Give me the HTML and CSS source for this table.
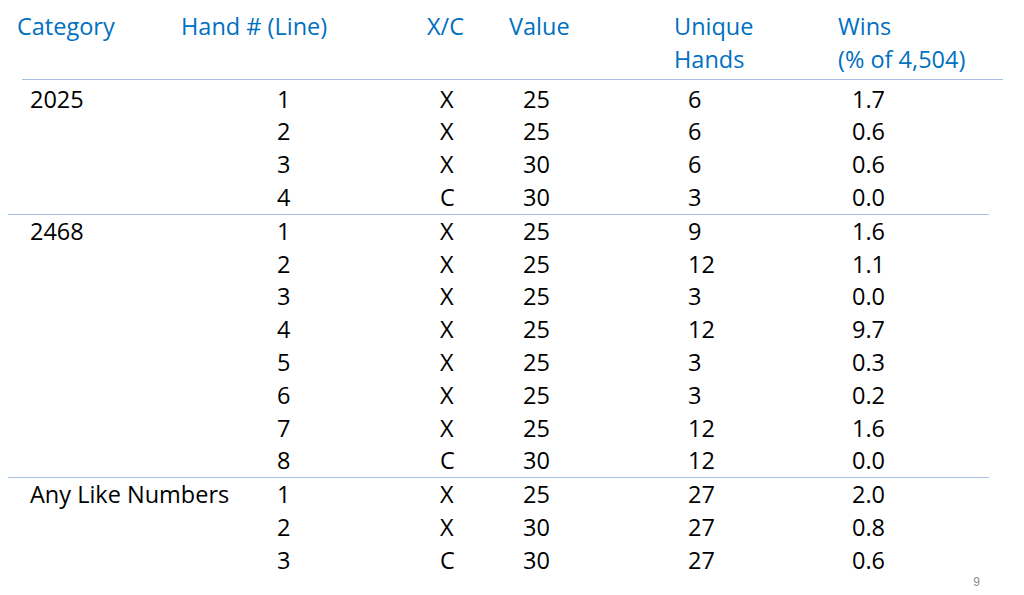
FILE: index.html
```html
<!DOCTYPE html>
<html lang="en">
<head>
    <meta charset="UTF-8">
    <meta name="viewport" content="width=device-width, initial-scale=1.0">
    <title>Hand Wins by Category</title>
    <link rel="stylesheet" href="styles.css">
</head>
<body>
    <div class="slide">
        <div class="table-head">
            <div class="th">Category</div>
            <div class="th">Hand # (Line)</div>
            <div class="th">X/C</div>
            <div class="th">Value</div>
            <div class="th">Unique<br>Hands</div>
            <div class="th">Wins<br>(% of 4,504)</div>
        </div>

        <hr class="rule rule-top">
        <div class="group first">
            <div class="row"><span class="cat">2025</span><span class="hand">1</span><span class="xc">X</span><span class="val">25</span><span class="uniq">6</span><span class="wins">1.7</span></div>
            <div class="row"><span class="cat"></span><span class="hand">2</span><span class="xc">X</span><span class="val">25</span><span class="uniq">6</span><span class="wins">0.6</span></div>
            <div class="row"><span class="cat"></span><span class="hand">3</span><span class="xc">X</span><span class="val">30</span><span class="uniq">6</span><span class="wins">0.6</span></div>
            <div class="row"><span class="cat"></span><span class="hand">4</span><span class="xc">C</span><span class="val">30</span><span class="uniq">3</span><span class="wins">0.0</span></div>
        </div>

        <hr class="rule">
        <div class="group">
            <div class="row"><span class="cat">2468</span><span class="hand">1</span><span class="xc">X</span><span class="val">25</span><span class="uniq">9</span><span class="wins">1.6</span></div>
            <div class="row"><span class="cat"></span><span class="hand">2</span><span class="xc">X</span><span class="val">25</span><span class="uniq">12</span><span class="wins">1.1</span></div>
            <div class="row"><span class="cat"></span><span class="hand">3</span><span class="xc">X</span><span class="val">25</span><span class="uniq">3</span><span class="wins">0.0</span></div>
            <div class="row"><span class="cat"></span><span class="hand">4</span><span class="xc">X</span><span class="val">25</span><span class="uniq">12</span><span class="wins">9.7</span></div>
            <div class="row"><span class="cat"></span><span class="hand">5</span><span class="xc">X</span><span class="val">25</span><span class="uniq">3</span><span class="wins">0.3</span></div>
            <div class="row"><span class="cat"></span><span class="hand">6</span><span class="xc">X</span><span class="val">25</span><span class="uniq">3</span><span class="wins">0.2</span></div>
            <div class="row"><span class="cat"></span><span class="hand">7</span><span class="xc">X</span><span class="val">25</span><span class="uniq">12</span><span class="wins">1.6</span></div>
            <div class="row"><span class="cat"></span><span class="hand">8</span><span class="xc">C</span><span class="val">30</span><span class="uniq">12</span><span class="wins">0.0</span></div>
        </div>

        <hr class="rule">
        <div class="group">
            <div class="row"><span class="cat">Any Like Numbers</span><span class="hand">1</span><span class="xc">X</span><span class="val">25</span><span class="uniq">27</span><span class="wins">2.0</span></div>
            <div class="row"><span class="cat"></span><span class="hand">2</span><span class="xc">X</span><span class="val">30</span><span class="uniq">27</span><span class="wins">0.8</span></div>
            <div class="row"><span class="cat"></span><span class="hand">3</span><span class="xc">C</span><span class="val">30</span><span class="uniq">27</span><span class="wins">0.6</span></div>
        </div>

        <div class="page-num">9</div>
    </div>
</body>
</html>
```

FILE: styles.css
```css
body {
    margin: 0;
    padding: 0;
    background: #fff;
    color: #000;
    font-family: "Open Sans", "Noto Sans", sans-serif;
    font-size: 23.5px;
}
.slide {
    width: 1024px;
    height: 595px;
    overflow: hidden;
    padding-top: 10px;
    box-sizing: border-box;
}
.table-head,
.row {
    display: grid;
    grid-template-columns: 164px 246px 82px 165px 164px 1fr;
    padding-left: 17px;
    line-height: 32.8px;
}
.table-head {
    color: #0070C0;
    padding-bottom: 3px;
}
.rule {
    border: none;
    border-top: 1px solid #a9c0e4;
    margin: 0 35px 0 8px;
    height: 0;
}
.rule-top {
    margin: 0 21px 0 22px;
}
.group.first {
    padding-top: 3px;
}
.cat {
    padding-left: 13px;
    white-space: nowrap;
}
.hand {
    padding-left: 96px;
}
.xc {
    padding-left: 13px;
}
.val,
.uniq,
.wins {
    padding-left: 14px;
}
.page-num {
    font-family: "Liberation Sans", sans-serif;
    font-size: 12px;
    color: #8c8c8c;
    text-align: right;
    padding-right: 44px;
    margin-top: -2px;
}
```
